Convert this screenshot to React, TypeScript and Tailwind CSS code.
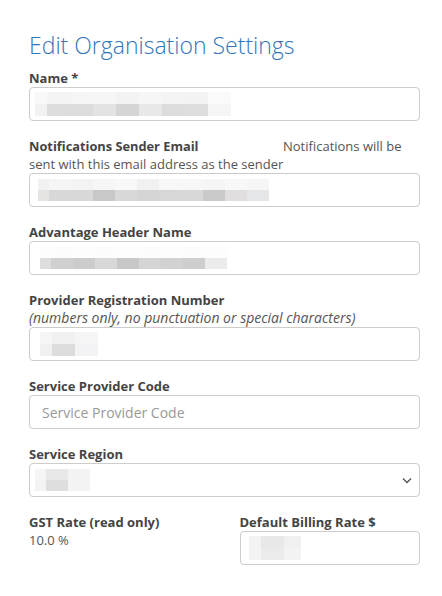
import React from 'react'

type Cell = { w: string; top: string; bottom: string }

// blurred (redacted) field values, drawn as two rows of grey cells
function Blur({ cells, row, offset }: { cells: Cell[]; row: string; offset: string }) {
  return (
    <div className={`flex ${offset}`}>
      {cells.map((c, i) => (
        <div key={i} className={`flex flex-col ${c.w}`}>
          <div className={`${row} ${c.top}`} />
          <div className={`${row} ${c.bottom}`} />
        </div>
      ))}
    </div>
  )
}

const nameCells: Cell[] = [
  { w: 'w-[12px]', top: 'bg-[#f8f8f8]', bottom: 'bg-[#f2f2f2]' },
  { w: 'w-[23px]', top: 'bg-[#f4f4f4]', bottom: 'bg-[#dddddd]' },
  { w: 'w-[23px]', top: 'bg-[#f5f5f5]', bottom: 'bg-[#dcdcdc]' },
  { w: 'w-[23px]', top: 'bg-[#f6f6f6]', bottom: 'bg-[#e3e3e3]' },
  { w: 'w-[23px]', top: 'bg-[#f3f3f3]', bottom: 'bg-[#d5d5d5]' },
  { w: 'w-[23px]', top: 'bg-[#f6f6f6]', bottom: 'bg-[#e8e8e8]' },
  { w: 'w-[23px]', top: 'bg-[#f4f4f4]', bottom: 'bg-[#dcdcdc]' },
  { w: 'w-[23px]', top: 'bg-[#f3f3f3]', bottom: 'bg-[#dedede]' },
  { w: 'w-[23px]', top: 'bg-[#fafafa]', bottom: 'bg-[#f5f5f5]' },
]

const emailCells: Cell[] = [
  { w: 'w-[11px]', top: 'bg-[#f1f1f1]', bottom: 'bg-[#e6e3e3]' },
  { w: 'w-[22px]', top: 'bg-[#f5f5f5]', bottom: 'bg-[#d8d8d8]' },
  { w: 'w-[22px]', top: 'bg-[#f3f3f3]', bottom: 'bg-[#d8d8d8]' },
  { w: 'w-[22px]', top: 'bg-[#f6f6f6]', bottom: 'bg-[#c8c8c8]' },
  { w: 'w-[22px]', top: 'bg-[#f8f8f8]', bottom: 'bg-[#d8d8d8]' },
  { w: 'w-[22px]', top: 'bg-[#f1f1f1]', bottom: 'bg-[#d5d5d5]' },
  { w: 'w-[22px]', top: 'bg-[#f8f8f8]', bottom: 'bg-[#d7d7d7]' },
  { w: 'w-[22px]', top: 'bg-[#f7f7f7]', bottom: 'bg-[#d8d8d8]' },
  { w: 'w-[22px]', top: 'bg-[#f5f5f5]', bottom: 'bg-[#cacaca]' },
  { w: 'w-[22px]', top: 'bg-[#f8f8f8]', bottom: 'bg-[#e0dede]' },
  { w: 'w-[22px]', top: 'bg-[#f6f6f6]', bottom: 'bg-[#e5e6e8]' },
]

const headerCells: Cell[] = [
  { w: 'w-[11px]', top: 'bg-[#fdfdfd]', bottom: 'bg-[#dddddd]' },
  { w: 'w-[22px]', top: 'bg-[#fcfcfc]', bottom: 'bg-[#d0d0d0]' },
  { w: 'w-[22px]', top: 'bg-[#fdfdfd]', bottom: 'bg-[#cccccc]' },
  { w: 'w-[22px]', top: 'bg-[#fcfcfc]', bottom: 'bg-[#d8d8d8]' },
  { w: 'w-[22px]', top: 'bg-[#fdfdfd]', bottom: 'bg-[#c8c8c8]' },
  { w: 'w-[22px]', top: 'bg-[#fcfcfc]', bottom: 'bg-[#d5d5d5]' },
  { w: 'w-[22px]', top: 'bg-[#fdfdfd]', bottom: 'bg-[#d2d2d2]' },
  { w: 'w-[22px]', top: 'bg-[#fcfcfc]', bottom: 'bg-[#cecece]' },
  { w: 'w-[22px]', top: 'bg-[#fdfdfd]', bottom: 'bg-[#ebebeb]' },
]

const providerCells: Cell[] = [
  { w: 'w-[12px]', top: 'bg-[#f5f5f5]', bottom: 'bg-[#f0f0f0]' },
  { w: 'w-[23px]', top: 'bg-[#f0f0f0]', bottom: 'bg-[#dcdcdc]' },
  { w: 'w-[23px]', top: 'bg-[#f5f5f5]', bottom: 'bg-[#f3f3f5]' },
]

const regionCells: Cell[] = [
  { w: 'w-[11px]', top: 'bg-[#f5f5f5]', bottom: 'bg-[#f3f3f3]' },
  { w: 'w-[22px]', top: 'bg-[#e8e8e8]', bottom: 'bg-[#dedede]' },
  { w: 'w-[22px]', top: 'bg-[#f3f3f3]', bottom: 'bg-[#f3f3f3]' },
]

const billingCells: Cell[] = [
  { w: 'w-[12px]', top: 'bg-[#f3f3f3]', bottom: 'bg-[#f3f3f3]' },
  { w: 'w-[23px]', top: 'bg-[#e8e8e8]', bottom: 'bg-[#ebebeb]' },
  { w: 'w-[17px]', top: 'bg-[#f0f0f0]', bottom: 'bg-[#f3f3f3]' },
]

const label = 'block text-[13px] leading-[18px] font-bold text-[#444]'
const box = 'h-[34px] w-full rounded-[4px] border border-[#cccccc] bg-white flex items-center'

function Field({ title, children }: { title: React.ReactNode; children: React.ReactNode }) {
  return (
    <div className="mb-4">
      {title}
      {children}
    </div>
  )
}

export default function App() {
  return (
    <div
      className="min-h-[596px] bg-white pl-[29px] pr-[22px] pt-[32px] text-[#555] text-[13px]"
      style={{ fontFamily: '"Open Sans", "Liberation Sans", sans-serif' }}
    >
      <h1 className="text-[23px] leading-[26px] font-light text-[#3276b8] mb-[11px]">
        Edit Organisation Settings
      </h1>

      <Field title={<label className={label}>Name *</label>}>
        <div className={box}>
          <Blur cells={nameCells} row="h-[12px]" offset="ml-[5px]" />
        </div>
      </Field>

      <Field
        title={
          <div className="text-[13px] leading-[18px] text-[#555]">
            <div className="flex items-baseline">
              <span className="w-[254px] text-[12.8px] font-bold text-[#444]">Notifications Sender Email</span>
              <span>Notifications will be</span>
            </div>
            <div>sent with this email address as the sender</div>
          </div>
        }
      >
        <div className={box}>
          <Blur cells={emailCells} row="h-[11px]" offset="ml-[8px]" />
        </div>
      </Field>

      <Field title={<label className={label}>Advantage Header Name</label>}>
        <div className={box}>
          <Blur cells={headerCells} row="h-[11px]" offset="ml-[10px]" />
        </div>
      </Field>

      <Field
        title={
          <>
            <label className={label}>Provider Registration Number</label>
            <div className="italic text-[14px] leading-[18px] text-[#555]">
              (numbers only, no punctuation or special characters)
            </div>
          </>
        }
      >
        <div className={box}>
          <Blur cells={providerCells} row="h-[12px]" offset="ml-[10px]" />
        </div>
      </Field>

      <Field title={<label className={label}>Service Provider Code</label>}>
        <div className={box}>
          <span className="pl-[12px] text-[14px] text-[#999]">Service Provider Code</span>
        </div>
      </Field>

      <Field title={<label className={label}>Service Region</label>}>
        <div className={`${box} justify-between`}>
          <Blur cells={regionCells} row="h-[11px]" offset="ml-[5px]" />
          <svg width="10" height="7" viewBox="0 0 10 7" className="mr-[7px]">
            <path d="M1 1.5 L5 5.5 L9 1.5" fill="none" stroke="#555" strokeWidth="1.4" />
          </svg>
        </div>
      </Field>

      <div className="flex gap-[30px]">
        <div className="flex-1">
          <div className={label}>GST Rate (read only)</div>
          <div className="text-[13px] leading-[18px] text-[#555]">10.0 %</div>
        </div>
        <div className="flex-1">
          <label className={label}>Default Billing Rate $</label>
          <div className={box}>
            <Blur cells={billingCells} row="h-[12px]" offset="ml-[8px]" />
          </div>
        </div>
      </div>
    </div>
  )
}
